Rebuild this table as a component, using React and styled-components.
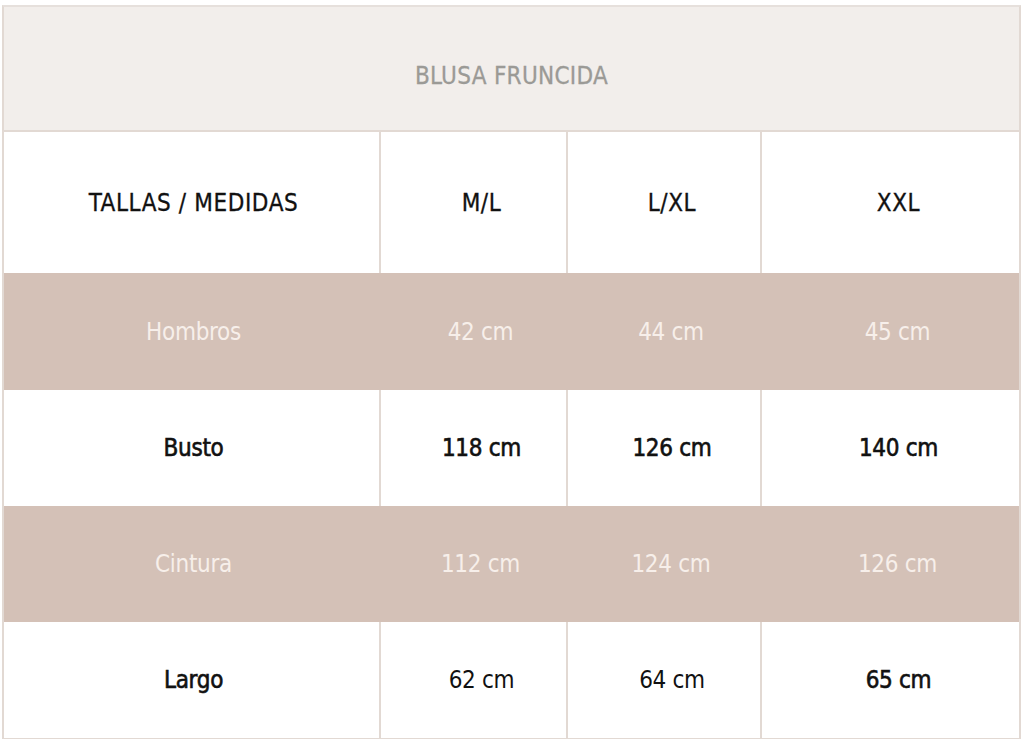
import styled, { createGlobalStyle } from 'styled-components';

const GlobalStyle = createGlobalStyle`
  html, body {
    margin: 0;
    padding: 0;
    background: #ffffff;
  }
  body {
    font-family: "DejaVu Sans Condensed", "Liberation Sans", sans-serif;
  }
`;

const Page = styled.div`
  width: 1024px;
  height: 739px;
  padding: 5px 0 0 2px;
  box-sizing: border-box;
  overflow: hidden;
`;

const Table = styled.div`
  width: 1019px;
  display: grid;
  grid-template-columns: 375px 187px 194px 1fr;
  grid-template-rows: 125px 141px 117px 116px 116px 116px;
  border: 2px solid #e2d9d3;
  border-top-color: #e6e0dc;
  box-sizing: border-box;
`;

const Title = styled.div`
  grid-column: 1 / -1;
  display: flex;
  align-items: center;
  justify-content: center;
  padding: 14px 0 0 0;
  background: #f2eeeb;
  border-bottom: 2px solid #e2d9d3;
  color: #9b9a96;
  font-size: 24px;
  letter-spacing: 0.3px;
  -webkit-text-stroke: 0.3px #9b9a96;
`;

const Cell = styled.div`
  display: flex;
  align-items: center;
  justify-content: center;
  padding-left: ${(props) => (props.$first ? '4px' : '16px')};
  font-size: 24px;
  letter-spacing: ${(props) => (props.$head ? '0.6px' : '-0.3px')};
  -webkit-text-stroke: ${(props) => (props.$strong ? '0.6px currentColor' : props.$head ? '0.3px currentColor' : '0')};
  background: ${(props) => (props.$tint ? '#d4c1b7' : '#ffffff')};
  color: ${(props) => (props.$tint ? '#f7efea' : '#111111')};
  border-left: ${(props) =>
    props.$first || props.$tint ? 'none' : '2px solid #e2d9d3'};
`;

const header = ['TALLAS / MEDIDAS', 'M/L', 'L/XL', 'XXL'];

const rows = [
  { label: 'Hombros', values: ['42 cm', '44 cm', '45 cm'], tint: true },
  { label: 'Busto', values: ['118 cm', '126 cm', '140 cm'], strong: [true, true, true, true] },
  { label: 'Cintura', values: ['112 cm', '124 cm', '126 cm'], tint: true },
  { label: 'Largo', values: ['62 cm', '64 cm', '65 cm'], strong: [true, false, false, true] },
];

const App = () => {
  return (
    <Page>
      <GlobalStyle />
      <Table>
        <Title>BLUSA FRUNCIDA</Title>
        {header.map((text, i) => (
          <Cell key={text} $head $first={i === 0}>
            {text}
          </Cell>
        ))}
        {rows.map((row) =>
          [row.label, ...row.values].map((text, i) => (
            <Cell
              key={row.label + i}
              $first={i === 0}
              $tint={row.tint}
              $strong={row.strong ? row.strong[i] : false}
            >
              {text}
            </Cell>
          ))
        )}
      </Table>
    </Page>
  );
};

export default App;
